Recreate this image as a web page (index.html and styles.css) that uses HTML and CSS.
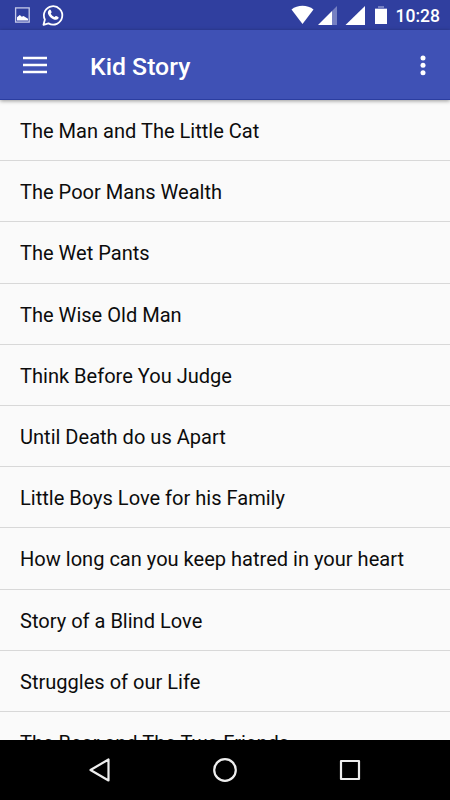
FILE: index.html
```html
<!DOCTYPE html>
<html lang="en">
<head>
<meta charset="utf-8">
<title>Kid Story</title>
<link rel="stylesheet" href="styles.css">
</head>
<body>
<div class="screen">
  <div class="status-bar">
    <svg class="status-icons" width="390" height="30" viewBox="0 0 390 30" aria-hidden="true">
      <rect x="15.6" y="7.900" width="13.600" height="14.200" fill="none" stroke="#c5cae9" stroke-width="1.300"/>
      <path d="M17 20.5v-3.2l2.8-2.3 2 1.7 1.7-.7 4.5 2.7v1.8z" fill="#fff"/>
      <path d="M43.500 24.800l1.400-5.200a9.200 9.200 0 1 1 3.600 3.800z" fill="none" stroke="#fff" stroke-width="1.8" stroke-linejoin="round"/>
      <path d="M49.2 9.9c.5-.5 1.2-.4 1.5.2l.9 2c.2.5-.5 1.1-.9 1.5 1 1.8 2.2 2.8 4 3.5.5-.6.9-1.3 1.5-1.1l2.1 1c.5.3.3 1.3-.1 1.8-1 1.2-2.6 1.3-4.3.6-2.8-1.1-4.8-3.1-5.800-5.500-.5-1.400-.1-3 1.100-4z" fill="#fff"/>
      <path d="M291.500 9.400C297.500 4.500 307.500 4.500 313.500 9.400L302.500 24z" fill="#fff"/>
      <path d="M332 11L337 6v19h-5z" fill="#7680c2"/>
      <path d="M318 25L332 11v14z" fill="#fff"/>
      <path d="M345.500 25L365 6v19z" fill="#fff"/>
      <path d="M378 6h6v2h3v1.500h-12v-1.500h3z" fill="#7680c2"/>
      <path d="M375 9h12v15h-12z" fill="#fff"/>
    </svg>
    <time class="clock">10:28</time>
  </div>
  <header class="app-bar">
    <svg class="menu" width="24" height="20" viewBox="0 0 24 20" aria-hidden="true">
      <path d="M0 2h24M0 9h24M0 16h24" stroke="#fff" stroke-width="2.500"/>
    </svg>
    <h1 class="title">Kid Story</h1>
    <svg class="more" width="6" height="22" viewBox="0 0 6 22" fill="#fff" aria-hidden="true">
      <circle cx="3" cy="3" r="2.500"/><circle cx="3" cy="10.300" r="2.500"/><circle cx="3" cy="17.700" r="2.500"/>
    </svg>
  </header>
  <ul class="stories">
    <li>The Man and The Little Cat</li>
    <li>The Poor Mans Wealth</li>
    <li>The Wet Pants</li>
    <li>The Wise Old Man</li>
    <li>Think Before You Judge</li>
    <li>Until Death do us Apart</li>
    <li>Little Boys Love for his Family</li>
    <li>How long can you keep hatred in your heart</li>
    <li>Story of a Blind Love</li>
    <li>Struggles of our Life</li>
    <li>The Bear and The Two Friends</li>
  </ul>
  <nav class="nav-bar">
    <svg width="26" height="26" viewBox="0 0 26 26"><path d="M3.500 13L21.500 2.500v21z"/></svg>
    <svg width="26" height="26" viewBox="0 0 26 26"><circle cx="13" cy="13" r="10.800"/></svg>
    <svg width="26" height="26" viewBox="0 0 26 26"><rect x="4" y="4" width="18" height="18"/></svg>
  </nav>
</div>
</body>
</html>
```

FILE: styles.css
```css
* { box-sizing: border-box; }

body {
  margin: 0;
  font-family: Roboto, "Liberation Sans", sans-serif;
}

.screen {
  display: flex;
  flex-direction: column;
  width: 450px;
  height: 800px;
  overflow: hidden;
  background: #fafafa;
}

.status-bar {
  display: flex;
  flex: 0 0 30px;
  align-items: center;
  justify-content: space-between;
  padding-right: 10px;
  background: #303f9f;
}

.clock {
  padding-top: 2px;
  color: #fff;
  font-size: 17.5px;
  font-weight: 500;
  line-height: 28px;
}

.app-bar {
  display: flex;
  position: relative;
  flex: 0 0 70px;
  align-items: center;
  padding: 2px 24px 0 23px;
  border-bottom: 1px solid #2b3da0;
  background: #3f51b5;
  color: #fff;
  box-shadow: 0 1px 4px rgba(0, 0, 0, .4);
}

.title {
  flex: 1;
  margin: 3px 0 0 43px;
  font-size: 24.8px;
  font-weight: 500;
  line-height: 30px;
}

.stories {
  flex: 1 1 0;
  min-height: 0;
  margin: 0;
  padding: 0;
  overflow: hidden;
  list-style: none;
}

.stories li {
  height: 61.2px;
  padding-left: 20px;
  border-bottom: 1px solid #d8d8d8;
  color: #0c0c0c;
  font-size: 20.06px;
  line-height: 62.4px;
  white-space: nowrap;
}

.nav-bar {
  display: flex;
  flex: 0 0 60px;
  align-items: center;
  justify-content: center;
  gap: 99px;
  background: #000;
}

.nav-bar svg {
  fill: none;
  stroke: #eee;
  stroke-width: 2.2;
  stroke-linejoin: round;
}
```
